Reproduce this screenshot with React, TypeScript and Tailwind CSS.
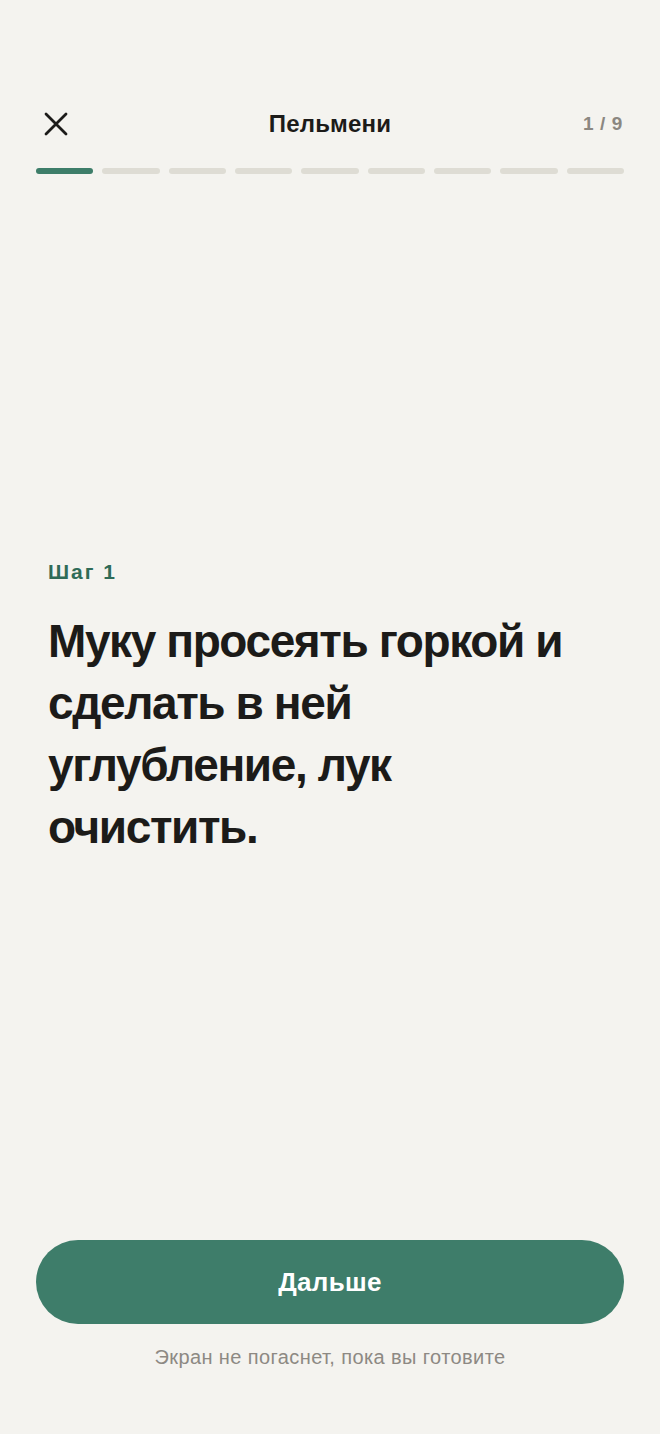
import React from "react";

export default function App() {
  const segs = Array.from({ length: 9 }, (_, i) => i);
  return (
    <div
      className="w-[660px] h-[1434px] bg-[#f4f3ef] flex flex-col"
      style={{ fontFamily: '"Liberation Sans", Arial, sans-serif' }}
    >
      <div className="h-[102px]" />
      <div className="px-[36px]">
        <div className="relative flex items-center justify-between h-[44px]">
          <button className="w-[44px] h-[44px] flex items-center justify-start pl-[8px]">
            <svg width="24" height="24" viewBox="0 0 24 24" fill="none">
              <path d="M2 2L22 22M22 2L2 22" stroke="#1c1b19" strokeWidth="2.8" strokeLinecap="round" />
            </svg>
          </button>
          <div className="absolute left-0 right-0 text-center text-[24px] font-bold text-[#1c1b19] tracking-[0.2px] pointer-events-none">
            Пельмени
          </div>
          <div className="text-[19px] font-bold text-[#8b8781] pr-[1px] tracking-[0.6px]">1 / 9</div>
        </div>
        <div className="mt-[22px] flex gap-[9px]">
          {segs.map((i) => (
            <div
              key={i}
              className={i === 0 ? "flex-1 h-[6px] rounded-full bg-[#3d7d69]" : "flex-1 h-[6px] rounded-full bg-[#dedcd4]"}
            />
          ))}
        </div>
      </div>
      <div className="flex-1 flex flex-col justify-center px-[48px] pt-[4px]">
        <div className="text-[21px] font-bold text-[#2f6b57] tracking-[2px] leading-[24px]">Шаг 1</div>
        <div className="mt-[26px] w-[540px] text-[46px] font-bold text-[#1c1b19] leading-[62px] tracking-[-1.4px]">
          Муку просеять горкой и сделать в ней углубление, лук очистить.
        </div>
      </div>
      <div className="px-[36px]">
        <button className="w-full h-[84px] rounded-full bg-[#3e7d6a] text-white text-[26px] font-bold tracking-[0.3px]">
          Дальше
        </button>
        <div className="mt-[20px] text-center text-[20px] text-[#8d8983] leading-[26px] tracking-[0.4px]">
          Экран не погаснет, пока вы готовите
        </div>
      </div>
      <div className="h-[64px]" />
    </div>
  );
}
